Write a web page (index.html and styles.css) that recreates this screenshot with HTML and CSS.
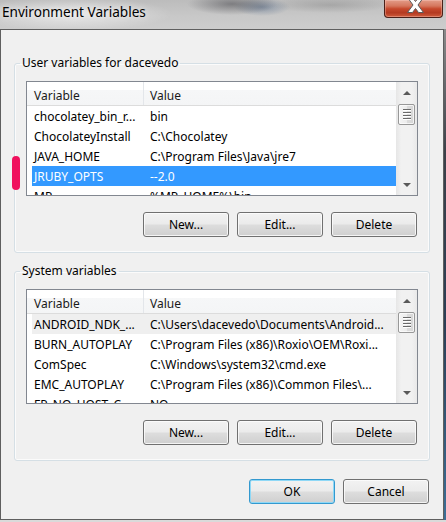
FILE: index.html
```html
<!DOCTYPE html>
<html>
<head>
<meta charset="utf-8">
<title>Environment Variables</title>
<link rel="stylesheet" href="styles.css">
</head>
<body>
<div class="window">
  <div class="titlebar">
    <span class="title">Environment Variables</span>
    <div class="close-btn">
      <svg class="close-x" viewBox="0 0 17 16" width="17" height="16"><polygon points="0.5,0.5 5.5,0.5 8.5,4.5 11.5,0.5 16.5,0.5 11,8 16.5,15.5 11.5,15.5 8.5,11.5 5.5,15.5 0.5,15.5 6,8"/></svg>
    </div>
  </div>
  <div class="middle">
    <div class="client">
      <fieldset class="group">
        <legend>User variables for dacevedo</legend>
        <div class="list">
          <div class="list-main">
            <div class="list-header"><div class="hcell hc1">Variable</div><div class="hcell hc2">Value</div></div>
            <div class="list-rows">
              <div class="row"><span class="c1">chocolatey_bin_r...</span><span class="c2">bin</span></div>
              <div class="row"><span class="c1">ChocolateyInstall</span><span class="c2">C:\Chocolatey</span></div>
              <div class="row"><span class="c1">JAVA_HOME</span><span class="c2">C:\Program Files\Java\jre7</span></div>
              <div class="row selected"><span class="c1">JRUBY_OPTS</span><span class="c2">--2.0</span></div>
              <div class="row"><span class="c1">MP</span><span class="c2">%MP_HOME%\bin</span></div>
            </div>
          </div>
          <div class="vscroll">
            <div class="sb-btn sb-up"><span class="arrow-up"></span></div>
            <div class="sb-thumb"><span class="grip"></span></div>
            <div class="sb-track"></div>
            <div class="sb-btn sb-down"><span class="arrow-down"></span></div>
          </div>
        </div>
        <div class="btn-row">
          <div class="btn">New...</div>
          <div class="btn">Edit...</div>
          <div class="btn">Delete</div>
        </div>
      </fieldset>
      <fieldset class="group group2">
        <legend>System variables</legend>
        <div class="list">
          <div class="list-main">
            <div class="list-header"><div class="hcell hc1">Variable</div><div class="hcell hc2">Value</div></div>
            <div class="list-rows">
              <div class="row inactive"><span class="c1">ANDROID_NDK_...</span><span class="c2">C:\Users\dacevedo\Documents\Android...</span></div>
              <div class="row"><span class="c1">BURN_AUTOPLAY</span><span class="c2">C:\Program Files (x86)\Roxio\OEM\Roxi...</span></div>
              <div class="row"><span class="c1">ComSpec</span><span class="c2">C:\Windows\system32\cmd.exe</span></div>
              <div class="row"><span class="c1">EMC_AUTOPLAY</span><span class="c2">C:\Program Files (x86)\Common Files\...</span></div>
              <div class="row"><span class="c1">FP_NO_HOST_C...</span><span class="c2">NO</span></div>
            </div>
          </div>
          <div class="vscroll">
            <div class="sb-btn sb-up"><span class="arrow-up"></span></div>
            <div class="sb-thumb"><span class="grip"></span></div>
            <div class="sb-track"></div>
            <div class="sb-btn sb-down"><span class="arrow-down"></span></div>
          </div>
        </div>
        <div class="btn-row">
          <div class="btn">New...</div>
          <div class="btn">Edit...</div>
          <div class="btn">Delete</div>
        </div>
      </fieldset>
      <div class="dialog-btns">
        <div class="btn btn-default">OK</div>
        <div class="btn">Cancel</div>
      </div>
    </div>
    <div class="frame-right"></div>
  </div>
  <div class="frame-bottom"></div>
  <div class="marker"></div>
</div>
</body>
</html>
```

FILE: styles.css
```css
* {
  box-sizing: border-box;
}

html,
body {
  margin: 0;
  padding: 0;
}

body {
  width: 446px;
  height: 522px;
  overflow: hidden;
  font-family: "Noto Sans", "DejaVu Sans", sans-serif;
  font-size: 12px;
  color: #000;
  background: #d6d6d6;
}

.window {
  position: relative;
  width: 446px;
  height: 522px;
  display: flex;
  flex-direction: column;
}

/* ---------- title bar ---------- */
.titlebar {
  height: 29px;
  flex: none;
  display: flex;
  justify-content: space-between;
  align-items: flex-start;
  background:
    radial-gradient(ellipse 100px 17px at 72px 14px, rgba(255, 255, 255, 0.6), rgba(255, 255, 255, 0) 100%),
    radial-gradient(ellipse 45px 11px at 232px 4px, rgba(60, 60, 66, 0.5), rgba(60, 60, 66, 0) 100%),
    radial-gradient(ellipse 28px 9px at 262px 7px, rgba(50, 80, 120, 0.4), rgba(50, 80, 120, 0) 100%),
    radial-gradient(ellipse 60px 8px at 330px 5px, rgba(120, 120, 120, 0.35), rgba(120, 120, 120, 0) 100%),
    linear-gradient(to bottom, #bcbcbc 0%, #c8c8c8 55%, #cdcdcd 100%);
}

.title {
  padding: 2px 0 0 2px;
  font-size: 13.6px;
  line-height: 20px;
  color: #000;
  text-shadow: 0 0 6px rgba(255, 255, 255, 0.9);
}

.close-btn {
  width: 59px;
  height: 18px;
  margin-right: 3px;
  display: flex;
  justify-content: center;
  align-items: flex-start;
  padding-left: 3px;
  border: 1px solid #4a2019;
  border-top: none;
  border-radius: 0 0 4px 4px;
  background: linear-gradient(to bottom, #e39c88 0%, #d5775e 35%, #c6482c 52%, #b43a21 75%, #cf5c3c 100%);
  box-shadow: inset 0 0 0 1px rgba(255, 215, 205, 0.35);
  overflow: hidden;
}

.close-x {
  margin-top: -3px;
  flex: none;
}

.close-x polygon {
  fill: #ffffff;
  stroke: #5a5a5a;
  stroke-width: 1;
}

/* ---------- frame ---------- */
.middle {
  flex: none;
  height: 491px;
  display: flex;
}

.frame-right {
  width: 2px;
  background: linear-gradient(to bottom, #8a8a8a 0%, #3c4048 25%, #2c3e55 60%, #3d6f96 100%);
}

.frame-bottom {
  flex: none;
  height: 2px;
  background: #dadada;
}

.client {
  width: 444px;
  height: 491px;
  border: 1px solid #5f5f5f;
  background: #f0f0f0;
  padding: 25px 0 0 0;
  display: flex;
  flex-direction: column;
}

/* ---------- group boxes ---------- */
.group {
  margin: 0 13px;
  padding: 10px 11px 15px 11px;
  min-width: 0;
  border: 1px solid #d5dfe5;
  border-radius: 3px;
  box-shadow: inset 0 0 0 1px #fbfbfb;
}

.group2 {
  margin-top: 10px;
}

.group legend {
  margin-left: -6px;
  padding: 0 2px;
  line-height: 16px;
  font-size: 12px;
}

/* ---------- list views ---------- */
.list {
  width: 392px;
  height: 115px;
  border: 1px solid #828790;
  background: #ffffff;
  display: flex;
}

.list-main {
  flex: 1;
  min-width: 0;
  overflow: hidden;
  display: flex;
  flex-direction: column;
}

.list-header {
  flex: none;
  height: 24px;
  display: flex;
  border-bottom: 1px solid #dcdcdc;
  background: linear-gradient(to bottom, #ffffff 0%, #ffffff 33%, #f6f7f8 34%, #f4f5f6 100%);
}

.hcell {
  display: flex;
  align-items: center;
  padding-top: 3px;
  color: #1a1a1a;
}

.hc1 {
  width: 117px;
  padding-left: 7px;
  border-right: 1px solid #e3e6ea;
}

.hc2 {
  padding-left: 6px;
}

.list-rows {
  flex: 1;
  overflow: hidden;
  padding-left: 5px;
}

.row {
  height: 20px;
  display: flex;
  align-items: center;
  white-space: nowrap;
}

.row .c1 {
  flex: none;
  width: 116px;
  padding-left: 2px;
}

.row .c2 {
  padding-left: 2px;
}

.row.selected {
  background: #3399ff;
  color: #ffffff;
}

.row.inactive {
  background: #efefef;
}

/* ---------- scroll bars ---------- */
.vscroll {
  flex: none;
  width: 21px;
  display: flex;
  flex-direction: column;
  background: linear-gradient(to right, #e6e6e6 0%, #f1f1f1 25%, #f1f1f1 75%, #e9e9e9 100%);
}

.sb-btn {
  flex: none;
  display: flex;
  justify-content: center;
  align-items: center;
}

.sb-up {
  height: 22px;
  padding-bottom: 1px;
}

.sb-down {
  height: 21px;
}

.arrow-up {
  width: 0;
  height: 0;
  border-left: 4px solid transparent;
  border-right: 4px solid transparent;
  border-bottom: 4px solid #5a5a5a;
}

.arrow-down {
  width: 0;
  height: 0;
  border-left: 4px solid transparent;
  border-right: 4px solid transparent;
  border-top: 4px solid #5a5a5a;
}

.sb-thumb {
  flex: none;
  height: 21px;
  margin: 0 2px;
  border: 1px solid #989898;
  border-radius: 2px;
  background: linear-gradient(to right, #f5f5f5 0%, #ececec 50%, #dcdcdc 51%, #d7d7d7 100%);
  box-shadow: inset 0 0 0 1px rgba(255, 255, 255, 0.7);
  display: flex;
  justify-content: center;
  align-items: center;
}

.grip {
  width: 8px;
  height: 11px;
  background: repeating-linear-gradient(to bottom, #6a6a6a 0 1px, #ffffff 1px 2px, transparent 2px 3px);
}

.sb-track {
  flex: 1;
}

/* ---------- buttons ---------- */
.btn-row {
  margin-top: 16px;
  padding-right: 1px;
  display: flex;
  justify-content: flex-end;
  gap: 8px;
}

.btn {
  width: 86px;
  height: 25px;
  display: flex;
  justify-content: center;
  align-items: center;
  border: 1px solid #707070;
  border-radius: 3px;
  background: linear-gradient(to bottom, #f2f2f2 0%, #ebebeb 48%, #dddddd 52%, #cfcfcf 100%);
  box-shadow: inset 0 0 0 1px rgba(252, 252, 252, 0.8);
  font-size: 12px;
  color: #000;
}

.btn-default {
  border-color: #3399cf;
  box-shadow: inset 0 0 0 1px #8fd8f6;
}

.dialog-btns {
  margin-top: 18px;
  padding-right: 14px;
  display: flex;
  justify-content: flex-end;
  gap: 8px;
}

/* ---------- annotation marker (overlay) ---------- */
.marker {
  position: absolute;
  left: 12px;
  top: 156px;
  width: 8px;
  height: 34px;
  border-radius: 4px;
  background: #f0115e;
}
```
